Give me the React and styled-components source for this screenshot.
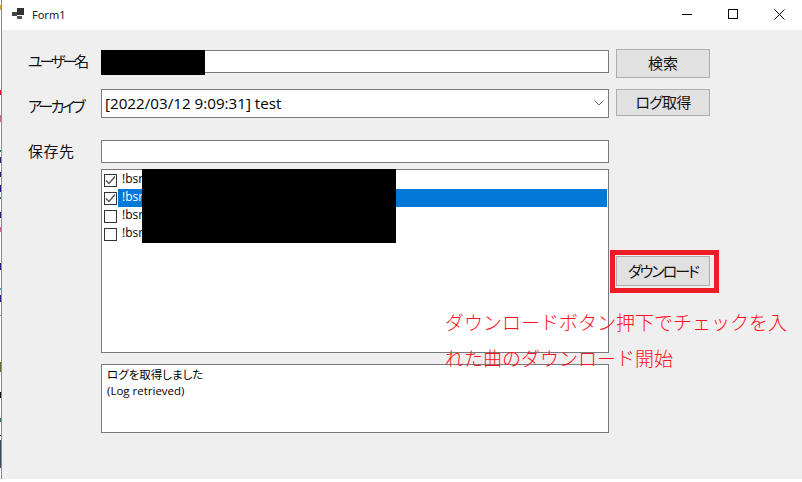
import React from "react";
import styled, { createGlobalStyle } from "styled-components";

const GlobalStyle = createGlobalStyle`
  html, body {
    margin: 0;
    padding: 0;
    background: #fff;
  }
  * {
    box-sizing: border-box;
  }
`;

const uiFont = `"Noto Sans CJK JP", "Noto Sans", sans-serif`;

// slivers of the desktop showing at the left edge of the window
const desktopBands = [
  [5, 10, "#e0a820"], [90, 95, "#e01030"], [115, 122, "#d07090"], [150, 152, "#208040"],
  [157, 163, "#202080"], [172, 177, "#202080"], [185, 192, "#202080"], [197, 199, "#208040"],
  [212, 218, "#202080"], [227, 232, "#d060a0"], [263, 270, "#202080"], [288, 290, "#40b0d0"],
  [295, 302, "#202080"], [315, 316, "#70a0d0"], [362, 372, "#607020"], [392, 398, "#000"],
  [418, 422, "#208040"], [435, 436, "#000"], [440, 468, "#3a4a70"],
];

const desktopStrip = `linear-gradient(to bottom, ${desktopBands
  .map(([from, to, color]) => `#fff ${from}px, ${color} ${from}px, ${color} ${to}px, #fff ${to}px`)
  .join(", ")})`;

const Page = styled.div`
  width: 802px;
  height: 482px;
  overflow: hidden;
  background-color: #fff;
  background-image: ${desktopStrip};
  background-size: 1px 100%;
  background-repeat: no-repeat;
  padding-left: 1px;
  padding-bottom: 3px;
  font-family: ${uiFont};
  font-feature-settings: "palt";
  color: #000;
`;

const Window = styled.div`
  height: 100%;
  border-left: 1px solid #8c8c8c;
  display: flex;
  flex-direction: column;
`;

const TitleBar = styled.div`
  height: 30px;
  flex: none;
  background: #fff;
  display: flex;
  align-items: center;
  padding: 0 0 2px 10px;
`;

const TitleText = styled.span`
  margin-left: 7px;
  font-family: "Noto Sans", sans-serif;
  font-size: 11px;
  color: #222;
`;

const WindowButtons = styled.div`
  margin-left: auto;
  display: flex;
`;

const WindowButton = styled.div`
  width: 46px;
  height: 28px;
  display: flex;
  align-items: center;
  justify-content: center;
`;

const Client = styled.div`
  flex: 1;
  background: #efefef;
  padding-left: 26px;
  position: relative;
`;

const Row = styled.div`
  display: flex;
  align-items: flex-start;
  margin-top: ${(p) => p.$top}px;
`;

const Label = styled.div`
  width: 73px;
  flex: none;
  font-size: 15px;
  line-height: 20px;
  white-space: nowrap;
  letter-spacing: ${(p) => p.$spacing || 0}px;
  padding-top: ${(p) => p.$pad || 0}px;
  color: #111;
`;

const TextBox = styled.div`
  width: 508px;
  height: ${(p) => p.$h || 23}px;
  flex: none;
  margin-top: ${(p) => p.$mt || 0}px;
  background: #fff;
  border: 1px solid #7a7a7a;
  position: relative;
`;

const Redaction = styled.div`
  position: absolute;
  left: ${(p) => p.$left}px;
  top: ${(p) => p.$top}px;
  width: ${(p) => p.$w}px;
  height: ${(p) => p.$h}px;
  background: #000;
`;

const Combo = styled(TextBox)`
  display: flex;
  align-items: center;
  padding: 0 4px 2px 3px;
  font-family: "Open Sans", sans-serif;
  font-size: 15.2px;
  justify-content: space-between;
`;

const Button = styled.div`
  width: 94px;
  height: ${(p) => p.$h}px;
  flex: none;
  margin-left: 7px;
  margin-top: ${(p) => p.$mt || 0}px;
  padding-bottom: 2px;
  background: #e1e1e1;
  border: 1px solid #adadad;
  display: flex;
  align-items: center;
  justify-content: center;
  font-size: 15px;
  white-space: nowrap;
  letter-spacing: ${(p) => p.$spacing || 0}px;
  color: #111;
`;

const ListBox = styled(TextBox)`
  padding: 1px 1px 0 2px;
`;

const ListItem = styled.div`
  height: 18px;
  display: flex;
  align-items: center;
  font-family: "Open Sans", sans-serif;
  font-size: 12px;
`;

const CheckBox = styled.div`
  width: 13px;
  height: 13px;
  flex: none;
  background: #fff;
  border: 1px solid #333;
  display: flex;
  align-items: center;
  justify-content: center;
`;

const ItemText = styled.div`
  flex: 1;
  height: 18px;
  line-height: 15px;
  margin-left: 1px;
  padding-left: 4px;
  background: ${(p) => (p.$selected ? "#0078d7" : "transparent")};
  color: ${(p) => (p.$selected ? "#fff" : "#000")};
`;

const LogBox = styled(TextBox)`
  padding: 2px 0 0 5px;
  font-size: 11.5px;
  line-height: 15.5px;
`;

const LogLine = styled.div`
  font-family: ${(p) => (p.$latin ? `"Open Sans", sans-serif` : uiFont)};
`;

const RedFrame = styled.div`
  position: absolute;
  left: 608px;
  top: 220px;
  width: 109px;
  height: 43px;
  border: 5px solid #ed1c24;
  pointer-events: none;
`;

const Annotation = styled.div`
  position: absolute;
  left: 443px;
  top: 274px;
  width: 350px;
  font-size: 19px;
  line-height: 36px;
  font-feature-settings: normal;
  color: #ff1020;
  font-weight: 300;
`;

const AppIcon = () => (
  <svg width="13" height="12" viewBox="0 0 13 12">
    <rect x="0" y="4" width="5" height="4" fill="#444" />
    <rect x="5" y="0" width="7" height="7" fill="#333" />
    <rect x="5" y="8" width="5" height="3" fill="#555" />
  </svg>
);

const CheckMark = () => (
  <svg width="11" height="11" viewBox="0 0 11 11">
    <path d="M1 5.5 L4 8.5 L10 1.5" fill="none" stroke="#555" strokeWidth="1.4" />
  </svg>
);

const Chevron = () => (
  <svg width="10" height="6" viewBox="0 0 10 6">
    <path d="M0.5 0.5 L5 5 L9.5 0.5" fill="none" stroke="#666" strokeWidth="1" />
  </svg>
);

const songs = [
  { checked: true, selected: false },
  { checked: true, selected: true },
  { checked: false, selected: false },
  { checked: false, selected: false },
];

const App = () => {
  return (
    <Page>
      <GlobalStyle />
      <Window>
        <TitleBar>
          <AppIcon />
          <TitleText>Form1</TitleText>
          <WindowButtons>
            <WindowButton>
              <svg width="11" height="11" viewBox="0 0 11 11">
                <path d="M0 5.5 H10" stroke="#000" strokeWidth="1" />
              </svg>
            </WindowButton>
            <WindowButton>
              <svg width="11" height="11" viewBox="0 0 11 11">
                <rect x="0.5" y="0.5" width="9" height="9" fill="none" stroke="#000" strokeWidth="1" />
              </svg>
            </WindowButton>
            <WindowButton>
              <svg width="11" height="11" viewBox="0 0 11 11">
                <path d="M0.5 0.5 L10.5 10.5 M10.5 0.5 L0.5 10.5" stroke="#000" strokeWidth="1" />
              </svg>
            </WindowButton>
          </WindowButtons>
        </TitleBar>
        <Client>
          <Row $top={19}>
            <Label $pad={2} $spacing={-3}>ユーザー名</Label>
            <TextBox $mt={1}>
              <Redaction $left={-1} $top={-1} $w={104} $h={25} />
            </TextBox>
            <Button $h={29}>検索</Button>
          </Row>
          <Row $top={11}>
            <Label $pad={7} $spacing={-2.6}>アーカイブ</Label>
            <Combo $h={29}>
              [2022/03/12 9:09:31] test
              <Chevron />
            </Combo>
            <Button $h={27} $spacing={-0.8}>ログ取得</Button>
          </Row>
          <Row $top={22}>
            <Label $pad={1} $spacing={0.5}>保存先</Label>
            <TextBox />
          </Row>
          <Row $top={6}>
            <Label />
            <ListBox $h={184}>
              {songs.map((song, i) => (
                <ListItem key={i}>
                  <CheckBox>{song.checked && <CheckMark />}</CheckBox>
                  <ItemText $selected={song.selected}>!bsr</ItemText>
                </ListItem>
              ))}
              <Redaction $left={40} $top={-1} $w={254} $h={74} />
            </ListBox>
            <Button $h={30} $mt={87} $spacing={-2}>ダウンロード</Button>
          </Row>
          <Row $top={11}>
            <Label />
            <LogBox $h={69}>
              <LogLine>ログを取得しました</LogLine>
              <LogLine $latin>(Log retrieved)</LogLine>
            </LogBox>
          </Row>
          <RedFrame />
          <Annotation>ダウンロードボタン押下でチェックを入れた曲のダウンロード開始</Annotation>
        </Client>
      </Window>
    </Page>
  );
};

export default App;
